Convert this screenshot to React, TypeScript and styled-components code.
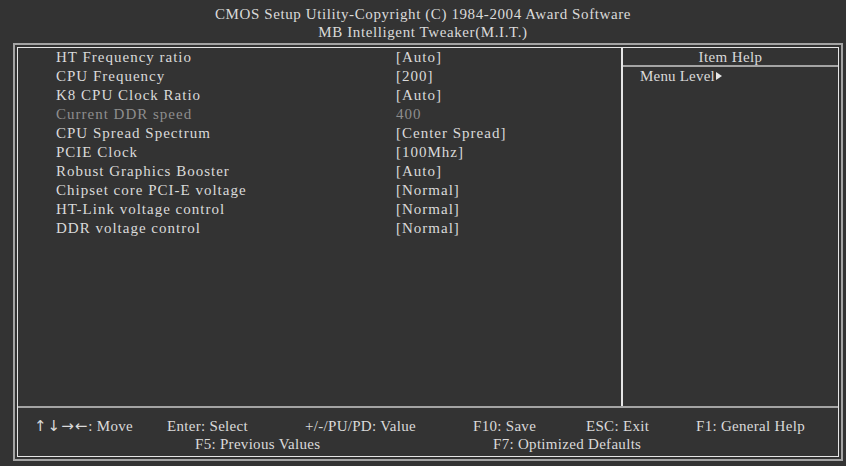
import React from "react";
import styled, { createGlobalStyle } from "styled-components";

const Global = createGlobalStyle`
  html, body { margin: 0; padding: 0; background: #333333; }
  body { font-family: "Liberation Serif", "Times New Roman", serif; color: #dadada; }
`;

const Screen = styled.div`
  width: 846px;
  height: 466px;
  background: #333333;
  box-sizing: border-box;
  display: flex;
  flex-direction: column;
  padding: 5px 3px 5px 13px;
`;

const Title = styled.div`
  text-align: center;
  font-size: 15px;
  line-height: 18px;
  letter-spacing: 0.6px;
  height: 38px;
  margin-left: -10px;
`;

const Frame = styled.div`
  flex: 1;
  border: 2px solid #a4a4a4;
  padding: 2px;
  display: flex;
`;

const Inner = styled.div`
  flex: 1;
  border: 1px solid #e6e6e6;
  display: flex;
  flex-direction: column;
`;

const Main = styled.div`
  flex: 1;
  display: grid;
  grid-template-columns: 605px 1fr;
`;

const List = styled.div`
  border-right: 2px solid #e6e6e6;
  padding-left: 38px;
  font-size: 15px;
  letter-spacing: 1px;
`;

const Row = styled.div<{ $disabled?: boolean }>`
  display: grid;
  grid-template-columns: 340px 1fr;
  height: 19px;
  line-height: 19px;
  color: ${(p) => (p.$disabled ? "#8e8e8e" : "#dadada")};
  white-space: nowrap;
`;

const Help = styled.div`
  display: flex;
  flex-direction: column;
  font-size: 15px;
`;

const HelpHead = styled.div`
  height: 17px;
  line-height: 18px;
  text-align: center;
  border-bottom: 2px solid #a4a4a4;
  letter-spacing: 0.4px;
`;

const HelpLine = styled.div`
  padding-left: 17px;
  line-height: 19px;
  display: flex;
  align-items: center;
  letter-spacing: 0.2px;
`;

const Tri = styled.span`
  display: inline-block;
  width: 0;
  height: 0;
  border-top: 4px solid transparent;
  border-bottom: 4px solid transparent;
  border-left: 6px solid #e6e6e6;
  margin-left: 1px;
  margin-top: -2px;
`;

const Footer = styled.div`
  height: 50px;
  border-top: 2px solid #a4a4a4;
  box-sizing: border-box;
  padding-top: 9px;
  font-size: 15px;
  letter-spacing: 0.3px;
`;

const FootRow = styled.div<{ $cols: string; $pad: number }>`
  display: grid;
  grid-template-columns: ${(p) => p.$cols};
  padding-left: ${(p) => p.$pad}px;
  line-height: 18px;
  white-space: nowrap;
`;

const Arrows = styled.span`
  font-family: "DejaVu Sans", sans-serif;
  font-size: 15px;
  letter-spacing: 1px;
`;

const rows: [string, string, boolean?][] = [
  ["HT Frequency ratio", "[Auto]"],
  ["CPU Frequency", "[200]"],
  ["K8 CPU Clock Ratio", "[Auto]"],
  ["Current DDR speed", "400", true],
  ["CPU Spread Spectrum", "[Center Spread]"],
  ["PCIE Clock", "[100Mhz]"],
  ["Robust Graphics Booster", "[Auto]"],
  ["Chipset core PCI-E voltage", "[Normal]"],
  ["HT-Link voltage control", "[Normal]"],
  ["DDR voltage control", "[Normal]"],
];

export default function App() {
  return (
    <>
      <Global />
      <Screen>
        <Title>
          <div>CMOS Setup Utility-Copyright (C) 1984-2004 Award Software</div>
          <div>MB Intelligent Tweaker(M.I.T.)</div>
        </Title>
        <Frame>
          <Inner>
            <Main>
              <List>
                {rows.map(([l, v, d]) => (
                  <Row key={l} $disabled={d}>
                    <span>{l}</span>
                    <span>{v}</span>
                  </Row>
                ))}
              </List>
              <Help>
                <HelpHead>Item Help</HelpHead>
                <HelpLine>
                  Menu Level
                  <Tri />
                </HelpLine>
              </Help>
            </Main>
            <Footer>
              <FootRow $cols="133px 138px 168px 113px 110px auto" $pad={16}>
                <span>
                  <Arrows>↑↓→←</Arrows>: Move
                </span>
                <span>Enter: Select</span>
                <span>+/-/PU/PD: Value</span>
                <span>F10: Save</span>
                <span>ESC: Exit</span>
                <span>F1: General Help</span>
              </FootRow>
              <FootRow $cols="298px auto" $pad={177}>
                <span>F5: Previous Values</span>
                <span>F7: Optimized Defaults</span>
              </FootRow>
            </Footer>
          </Inner>
        </Frame>
      </Screen>
    </>
  );
}
